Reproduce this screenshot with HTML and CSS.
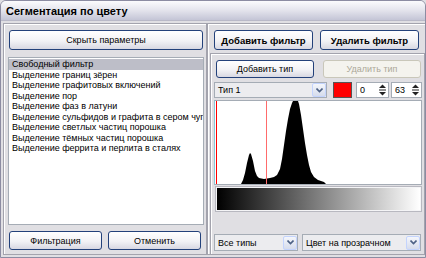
FILE: index.html
```html
<!DOCTYPE html>
<html lang="ru">
<head>
  <meta charset="UTF-8">
  <title>Сегментация по цвету</title>
  <link rel="stylesheet" href="styles.css">
</head>
<body>
  <div class="window">
    <div class="titlebar">Сегментация по цвету</div>

    <div class="content">
      <!-- left: filter list -->
      <div class="panel left">
        <button class="btn wide" type="button">Скрыть параметры</button>
        <ul class="listbox">
          <li class="selected">Свободный фильтр</li>
          <li>Выделение границ зёрен</li>
          <li>Выделение графитовых включений</li>
          <li>Выделение пор</li>
          <li>Выделение фаз в латуни</li>
          <li>Выделение сульфидов и графита в сером чугуне</li>
          <li>Выделение светлых частиц порошка</li>
          <li>Выделение тёмных частиц порошка</li>
          <li>Выделение феррита и перлита в сталях</li>
        </ul>
        <div class="btn-row">
          <button class="btn" type="button">Фильтрация</button>
          <button class="btn" type="button">Отменить</button>
        </div>
      </div>

      <!-- right: filter settings -->
      <div class="panel right">
        <div class="btn-row top">
          <button class="btn bold" type="button">Добавить фильтр</button>
          <button class="btn bold" type="button">Удалить фильтр</button>
        </div>

        <div class="group">
          <div class="btn-row types">
            <button class="btn" type="button">Добавить тип</button>
            <button class="btn" type="button" disabled>Удалить тип</button>
          </div>

          <div class="type-row">
            <div class="combo type-combo">
              <span class="combo-text">Тип 1</span>
              <span class="combo-arrow"><svg width="7" height="5" viewBox="0 0 7 5"><polyline points="0.5,0.5 3.5,3.5 6.5,0.5" fill="none" stroke="#4d6185" stroke-width="1.6"/></svg></span>
            </div>
            <div class="swatch"></div>
            <div class="spin s1">
              <span class="spin-text">0</span>
              <span class="spin-btns"><svg width="9" height="14" viewBox="0 0 9 14"><polygon points="1,5 8,5 4.5,1.5" fill="#222"/><rect x="1" y="6.5" width="7" height="1" fill="#222"/><polygon points="1,9 8,9 4.5,12.5" fill="#222"/></svg></span>
            </div>
            <div class="spin s2">
              <span class="spin-text">63</span>
              <span class="spin-btns"><svg width="9" height="14" viewBox="0 0 9 14"><polygon points="1,5 8,5 4.5,1.5" fill="#222"/><rect x="1" y="6.5" width="7" height="1" fill="#222"/><polygon points="1,9 8,9 4.5,12.5" fill="#222"/></svg></span>
            </div>
          </div>

          <div class="histogram">
            <svg width="206" height="83" viewBox="0 0 206 83">
              <polygon fill="#000" points="26,83 28,79 30,72 32,62 34,54 35,52 36,53 38,60 40,70 42,75 44,77 49,78 55,77 59,76 62,74 65,68 67,58 69,44 71,30 73,18 75,8 77,2 78,0 83,0 84,3 86,14 88,28 90,42 92,54 94,64 96,71 99,76 103,79 109,81 111,83"/>
              <rect x="1" y="0" width="1" height="83" fill="#ff0000"/>
              <rect x="51" y="0" width="1" height="83" fill="#ff6b6b"/>
            </svg>
          </div>

          <div class="gradient"><div class="gradient-fill"></div></div>

          <div class="bottom-row">
            <div class="combo all-combo">
              <span class="combo-text">Все типы</span>
              <span class="combo-arrow"><svg width="7" height="5" viewBox="0 0 7 5"><polyline points="0.5,0.5 3.5,3.5 6.5,0.5" fill="none" stroke="#4d6185" stroke-width="1.6"/></svg></span>
            </div>
            <div class="combo mode-combo">
              <span class="combo-text">Цвет на прозрачном</span>
              <span class="combo-arrow"><svg width="7" height="5" viewBox="0 0 7 5"><polyline points="0.5,0.5 3.5,3.5 6.5,0.5" fill="none" stroke="#4d6185" stroke-width="1.6"/></svg></span>
            </div>
          </div>
        </div>
      </div>
    </div>
  </div>
</body>
</html>
```

FILE: styles.css
```css
* {
  box-sizing: border-box;
  margin: 0;
  padding: 0;
}

body {
  font-family: 'Liberation Sans', Arial, sans-serif;
  font-size: 9px;
  color: #000;
  background: #e0dfe3;
}

.window {
  width: 426px;
  height: 258px;
  border: 1px solid #8c8ca2;
  border-radius: 6px 6px 0 0;
  background: #e0dfe3;
  display: flex;
  flex-direction: column;
  overflow: hidden;
}

.titlebar {
  height: 20px;
  padding-left: 5px;
  line-height: 21px;
  font-weight: bold;
  font-size: 11px;
  background: linear-gradient(#fbfbfd, #e6e6ee 45%, #c4c5d6);
  border-bottom: 1px solid #b9b9c8;
}

.content {
  flex: 1;
  display: flex;
  padding: 2px 1px 2px 2px;
}

.panel {
  display: flex;
  flex-direction: column;
  border: 1px solid #a3a3ad;
  box-shadow: inset 1px 1px 0 #fff;
}

.left {
  width: 204px;
  padding: 6px 2px 3px 5px;
}

.right {
  flex: 1;
  padding: 6px 3px 0 1px;
}

/* buttons */
.btn {
  font-family: inherit;
  font-size: 9px;
  color: #000;
  height: 20px;
  border: 1px solid #23417a;
  border-radius: 3px;
  background: linear-gradient(#ffffff, #f2f2f5 55%, #d8d8e2);
  cursor: pointer;
}

.btn.bold {
  font-weight: bold;
  font-size: 9.5px;
}

.btn:disabled {
  color: #aca899;
  border-color: #c9c7ba;
  background: #f4f3ee;
}

.btn.wide {
  width: 194px;
}

.btn-row {
  display: flex;
  gap: 6px;
}

.left .btn-row {
  margin-top: 6px;
}

.left .btn-row .btn {
  width: 93px;
  height: 19px;
}

.right .btn-row.top {
  padding-left: 5px;
  gap: 7px;
}

.right .btn-row.top .btn {
  width: 99px;
}

/* list */
.listbox {
  list-style: none;
  margin-top: 7px;
  margin-left: -1px;
  width: 196px;
  height: 168px;
  background: #fff;
  border: 1px solid #a5acb5;
  padding-top: 1px;
  overflow: hidden;
}

.listbox li {
  height: 10.5px;
  line-height: 10.5px;
  padding-left: 3px;
  white-space: nowrap;
  overflow: hidden;
}

.listbox li.selected {
  background: #bdbec8;
}

/* right group */
.group {
  flex: 1;
  margin-top: 3px;
  margin-left: 1px;
  border: 1px solid #a3a3ad;
  border-bottom: none;
  box-shadow: inset 1px 1px 0 #fff;
  padding: 6px 2px 2px 3px;
  display: flex;
  flex-direction: column;
}

.btn-row.types {
  padding-left: 2px;
  gap: 9px;
}

.btn-row.types .btn {
  width: 98px;
  height: 18px;
}

.type-row {
  display: flex;
  align-items: center;
  margin-top: 4px;
  height: 16px;
}

.combo {
  display: flex;
  align-items: center;
  height: 16px;
  border: 1px solid #a5acb5;
  background: #ececef;
}

.combo-text {
  flex: 1;
  padding-left: 3px;
  white-space: nowrap;
  overflow: hidden;
}

.combo-arrow {
  width: 14px;
  height: 14px;
  display: flex;
  align-items: center;
  justify-content: center;
  border: 1px solid #c3d3fd;
  border-radius: 2px;
  background: linear-gradient(#f4f6fb, #d6dcec);
}

.type-combo {
  width: 113px;
}

.swatch {
  width: 19px;
  height: 16px;
  margin-left: 6px;
  background: #ff0000;
  border: 1px solid #555;
}

.spin {
  display: flex;
  align-items: center;
  height: 16px;
  border: 1px solid #a5acb5;
  background: #fff;
}

.spin.s1 {
  width: 33px;
  margin-left: 4px;
}

.spin.s2 {
  width: 31px;
  margin-left: 2px;
}

.spin-text {
  flex: 1;
  padding-left: 3px;
}

.spin-btns {
  width: 10px;
  height: 14px;
  display: flex;
  align-items: center;
}

.histogram {
  margin-top: 2px;
  width: 208px;
  height: 85px;
  background: #fff;
  border: 1px solid #a5acb5;
  border-left-color: #8cc8d8;
}

.histogram svg {
  display: block;
}

.gradient {
  margin-top: 1px;
  margin-left: 1px;
  width: 207px;
  height: 26px;
  border: 1px solid #b8b8c0;
  padding: 1px;
  background: #f4f4f6;
}

.gradient-fill {
  height: 100%;
  background: linear-gradient(to right, #000, #fff);
}

.bottom-row {
  margin-top: auto;
  margin-bottom: 1px;
  display: flex;
  gap: 4px;
}

.bottom-row .combo {
  height: 17px;
}

.all-combo {
  width: 84px;
}

.mode-combo {
  width: 119px;
}
```
